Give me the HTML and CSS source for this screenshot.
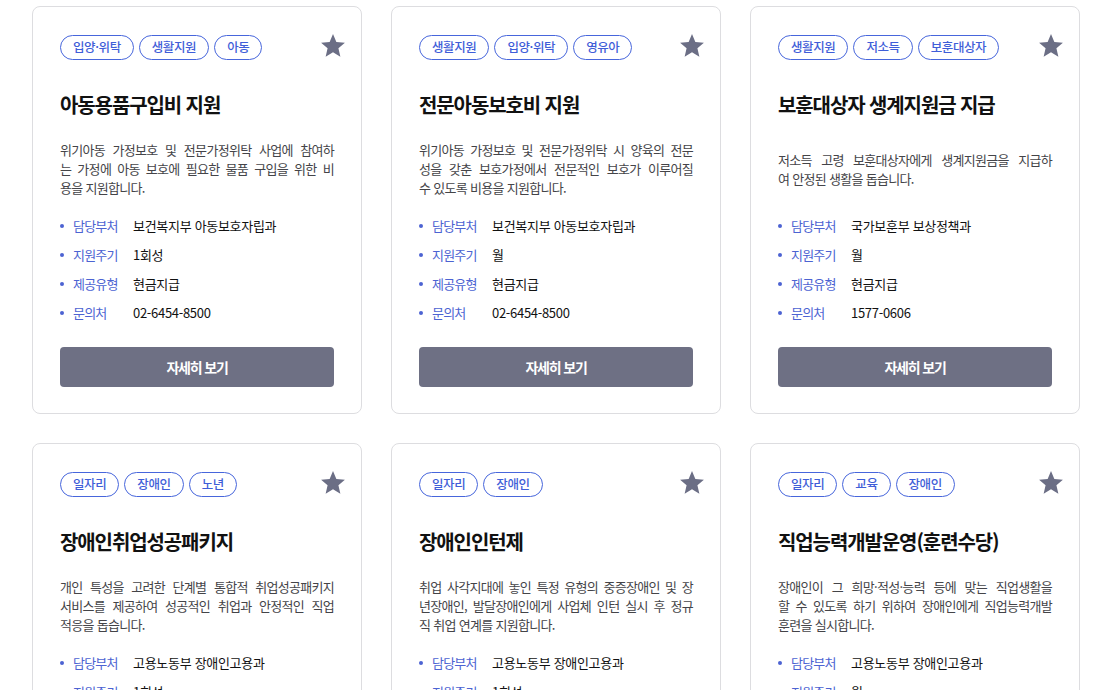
FILE: index.html
```html
<!DOCTYPE html>
<html lang="ko">
<head>
<meta charset="utf-8">
<title>복지 서비스</title>
<link rel="stylesheet" href="styles.css">
</head>
<body>
<main class="grid">

  <article class="card">
    <button class="fav" aria-label="즐겨찾기"><svg viewBox="2 2 20 19.3" width="24" height="23"><path d="M12 17.27L18.18 21l-1.64-7.03L22 9.24l-7.19-.61L12 2 9.19 8.63 2 9.24l5.46 4.73L5.82 21z"/></svg></button>
    <div class="tags"><span class="tag">입양·위탁</span><span class="tag">생활지원</span><span class="tag">아동</span></div>
    <h2 class="title">아동용품구입비 지원</h2>
    <div class="desc"><p><span class="ln">위기아동 가정보호 및 전문가정위탁 사업에 참여하</span><span class="ln">는 가정에 아동 보호에 필요한 물품 구입을 위한 비</span><span class="ln">용을 지원합니다.</span></p></div>
    <ul class="info">
      <li><span class="lbl">담당부처</span><span class="val">보건복지부 아동보호자립과</span></li>
      <li><span class="lbl">지원주기</span><span class="val">1회성</span></li>
      <li><span class="lbl">제공유형</span><span class="val">현금지급</span></li>
      <li><span class="lbl">문의처</span><span class="val">02-6454-8500</span></li>
    </ul>
    <button class="more">자세히 보기</button>
  </article>

  <article class="card">
    <button class="fav" aria-label="즐겨찾기"><svg viewBox="2 2 20 19.3" width="24" height="23"><path d="M12 17.27L18.18 21l-1.64-7.03L22 9.24l-7.19-.61L12 2 9.19 8.63 2 9.24l5.46 4.73L5.82 21z"/></svg></button>
    <div class="tags"><span class="tag">생활지원</span><span class="tag">입양·위탁</span><span class="tag">영유아</span></div>
    <h2 class="title">전문아동보호비 지원</h2>
    <div class="desc"><p><span class="ln">위기아동 가정보호 및 전문가정위탁 시 양육의 전문</span><span class="ln">성을 갖춘 보호가정에서 전문적인 보호가 이루어질</span><span class="ln">수 있도록 비용을 지원합니다.</span></p></div>
    <ul class="info">
      <li><span class="lbl">담당부처</span><span class="val">보건복지부 아동보호자립과</span></li>
      <li><span class="lbl">지원주기</span><span class="val">월</span></li>
      <li><span class="lbl">제공유형</span><span class="val">현금지급</span></li>
      <li><span class="lbl">문의처</span><span class="val">02-6454-8500</span></li>
    </ul>
    <button class="more">자세히 보기</button>
  </article>

  <article class="card">
    <button class="fav" aria-label="즐겨찾기"><svg viewBox="2 2 20 19.3" width="24" height="23"><path d="M12 17.27L18.18 21l-1.64-7.03L22 9.24l-7.19-.61L12 2 9.19 8.63 2 9.24l5.46 4.73L5.82 21z"/></svg></button>
    <div class="tags"><span class="tag">생활지원</span><span class="tag">저소득</span><span class="tag">보훈대상자</span></div>
    <h2 class="title">보훈대상자 생계지원금 지급</h2>
    <div class="desc"><p><span class="ln">저소득 고령 보훈대상자에게 생계지원금을 지급하</span><span class="ln">여 안정된 생활을 돕습니다.</span></p></div>
    <ul class="info">
      <li><span class="lbl">담당부처</span><span class="val">국가보훈부 보상정책과</span></li>
      <li><span class="lbl">지원주기</span><span class="val">월</span></li>
      <li><span class="lbl">제공유형</span><span class="val">현금지급</span></li>
      <li><span class="lbl">문의처</span><span class="val">1577-0606</span></li>
    </ul>
    <button class="more">자세히 보기</button>
  </article>

  <article class="card">
    <button class="fav" aria-label="즐겨찾기"><svg viewBox="2 2 20 19.3" width="24" height="23"><path d="M12 17.27L18.18 21l-1.64-7.03L22 9.24l-7.19-.61L12 2 9.19 8.63 2 9.24l5.46 4.73L5.82 21z"/></svg></button>
    <div class="tags"><span class="tag">일자리</span><span class="tag">장애인</span><span class="tag">노년</span></div>
    <h2 class="title">장애인취업성공패키지</h2>
    <div class="desc"><p><span class="ln">개인 특성을 고려한 단계별 통합적 취업성공패키지</span><span class="ln">서비스를 제공하여 성공적인 취업과 안정적인 직업</span><span class="ln">적응을 돕습니다.</span></p></div>
    <ul class="info">
      <li><span class="lbl">담당부처</span><span class="val">고용노동부 장애인고용과</span></li>
      <li><span class="lbl">지원주기</span><span class="val">1회성</span></li>
      <li><span class="lbl">제공유형</span><span class="val">현금지급</span></li>
      <li><span class="lbl">문의처</span><span class="val">1350</span></li>
    </ul>
    <button class="more">자세히 보기</button>
  </article>

  <article class="card">
    <button class="fav" aria-label="즐겨찾기"><svg viewBox="2 2 20 19.3" width="24" height="23"><path d="M12 17.27L18.18 21l-1.64-7.03L22 9.24l-7.19-.61L12 2 9.19 8.63 2 9.24l5.46 4.73L5.82 21z"/></svg></button>
    <div class="tags"><span class="tag">일자리</span><span class="tag">장애인</span></div>
    <h2 class="title">장애인인턴제</h2>
    <div class="desc"><p><span class="ln">취업 사각지대에 놓인 특정 유형의 중증장애인 및 장</span><span class="ln">년장애인, 발달장애인에게 사업체 인턴 실시 후 정규</span><span class="ln">직 취업 연계를 지원합니다.</span></p></div>
    <ul class="info">
      <li><span class="lbl">담당부처</span><span class="val">고용노동부 장애인고용과</span></li>
      <li><span class="lbl">지원주기</span><span class="val">1회성</span></li>
      <li><span class="lbl">제공유형</span><span class="val">현금지급</span></li>
      <li><span class="lbl">문의처</span><span class="val">1350</span></li>
    </ul>
    <button class="more">자세히 보기</button>
  </article>

  <article class="card">
    <button class="fav" aria-label="즐겨찾기"><svg viewBox="2 2 20 19.3" width="24" height="23"><path d="M12 17.27L18.18 21l-1.64-7.03L22 9.24l-7.19-.61L12 2 9.19 8.63 2 9.24l5.46 4.73L5.82 21z"/></svg></button>
    <div class="tags"><span class="tag">일자리</span><span class="tag">교육</span><span class="tag">장애인</span></div>
    <h2 class="title">직업능력개발운영(훈련수당)</h2>
    <div class="desc"><p><span class="ln">장애인이 그 희망·적성·능력 등에 맞는 직업생활을</span><span class="ln">할 수 있도록 하기 위하여 장애인에게 직업능력개발</span><span class="ln">훈련을 실시합니다.</span></p></div>
    <ul class="info">
      <li><span class="lbl">담당부처</span><span class="val">고용노동부 장애인고용과</span></li>
      <li><span class="lbl">지원주기</span><span class="val">월</span></li>
      <li><span class="lbl">제공유형</span><span class="val">현금지급</span></li>
      <li><span class="lbl">문의처</span><span class="val">1588-1519</span></li>
    </ul>
    <button class="more">자세히 보기</button>
  </article>

</main>
</body>
</html>
```

FILE: styles.css
```css
* { box-sizing: border-box; }

html, body {
  margin: 0;
  padding: 0;
  background: #ffffff;
}

body {
  font-family: "Noto Sans CJK KR", "Noto Sans", sans-serif;
  color: #111;
}

.grid {
  display: grid;
  grid-template-columns: repeat(3, 330px);
  column-gap: 29px;
  row-gap: 29px;
  padding: 6px 0 40px 32px;
}

.card {
  position: relative;
  display: flex;
  flex-direction: column;
  border: 1px solid #dddde0;
  border-radius: 8px;
  padding: 28px 27px 26px;
  background: #fff;
}

.fav {
  position: absolute;
  top: 27px;
  right: 16px;
  width: 24px;
  height: 23px;
  padding: 0;
  border: 0;
  background: none;
  display: block;
}
.fav svg {
  display: block;
  fill: #6b6e85;
}

.tags {
  display: flex;
  gap: 5px;
  height: 25px;
}

.tag {
  display: inline-flex;
  align-items: center;
  height: 25px;
  padding: 0 12px;
  border: 1px solid #4766dc;
  border-radius: 13px;
  color: #3f5ed8;
  font-size: 12.5px;
  font-weight: 500;
  letter-spacing: -0.4px;
  line-height: 1;
}

.title {
  margin: 31px 0 0;
  font-size: 20px;
  line-height: 28px;
  font-weight: 700;
  letter-spacing: -1.1px;
  color: #111;
}

.desc {
  margin-top: 21px;
  height: 57px;
  display: flex;
  flex-direction: column;
  justify-content: center;
}

.desc p {
  margin: 0;
  font-size: 13px;
  line-height: 19px;
  color: #444448;
  letter-spacing: -0.7px;
}

.ln {
  display: block;
  white-space: nowrap;
  text-align: justify;
  text-align-last: justify;
  text-justify: inter-word;
}
.ln:last-child {
  text-align-last: auto;
}

.info {
  list-style: none;
  margin: 19px 0 0;
  padding: 0;
  display: flex;
  flex-direction: column;
  gap: 10px;
}

.info li {
  display: flex;
  align-items: center;
  font-size: 13px;
  line-height: 19px;
  letter-spacing: -0.8px;
}

.info li::before {
  content: "";
  width: 4px;
  height: 4px;
  border-radius: 50%;
  background: #4c63d2;
  margin-right: 9px;
  flex: none;
}

.lbl {
  width: 60px;
  flex: none;
  color: #4c63d2;
}

.val {
  color: #111;
  font-weight: 400;
  letter-spacing: -0.3px;
}

.more {
  margin-top: 25px;
  height: 40px;
  width: 100%;
  border: 0;
  border-radius: 4px;
  background: #6e7084;
  color: #fff;
  font-family: "Noto Sans CJK KR", "Noto Sans", sans-serif;
  font-size: 14px;
  font-weight: 700;
  letter-spacing: -1.2px;
}
```
